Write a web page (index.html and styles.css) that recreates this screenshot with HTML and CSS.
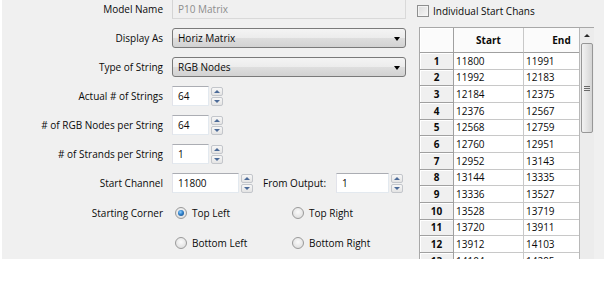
FILE: index.html
```html
<!DOCTYPE html>
<html>
<head>
<meta charset="utf-8">
<link rel="stylesheet" href="styles.css">
</head>
<body>
<div class="panel">
  <div class="left">
    <div class="row"><span class="lbl">Model Name</span><div class="text disabled">P10 Matrix</div></div>
    <div class="row"><span class="lbl">Display As</span><div class="combo">Horiz Matrix<span class="arrow"></span></div></div>
    <div class="row"><span class="lbl">Type of String</span><div class="combo">RGB Nodes<span class="arrow"></span></div></div>
    <div class="row"><span class="lbl">Actual # of Strings</span><div class="text num">64</div><div class="spinbtns"><span class="sb up"></span><span class="sb down"></span></div></div>
    <div class="row"><span class="lbl"># of RGB Nodes per String</span><div class="text num">64</div><div class="spinbtns"><span class="sb up"></span><span class="sb down"></span></div></div>
    <div class="row"><span class="lbl"># of Strands per String</span><div class="text num">1</div><div class="spinbtns"><span class="sb up"></span><span class="sb down"></span></div></div>
    <div class="row"><span class="lbl">Start Channel</span><div class="text chan">11800</div><div class="spinbtns"><span class="sb up"></span><span class="sb down"></span></div><span class="lbl2">From Output:</span><div class="text out">1</div><div class="spinbtns"><span class="sb up"></span><span class="sb down"></span></div></div>
    <div class="row rrow"><span class="lbl">Starting Corner</span><div class="radios"><span class="radio"><span class="rb on"></span>Top Left</span><span class="radio"><span class="rb"></span>Top Right</span></div></div>
    <div class="row rrow"><span class="lbl"></span><div class="radios"><span class="radio"><span class="rb"></span>Bottom Left</span><span class="radio"><span class="rb"></span>Bottom Right</span></div></div>
  </div>
  <div class="right">
    <div class="check"><span class="cb"></span>Individual Start Chans</div>
    <div class="grid">
      <div class="cells">
        <div class="grow head"><span class="corner"></span><span class="ch c1">Start</span><span class="ch c2">End</span></div>
        <div class="grow"><span class="rl">1</span><span class="cell c1">11800</span><span class="cell c2">11991</span></div>
        <div class="grow"><span class="rl">2</span><span class="cell c1">11992</span><span class="cell c2">12183</span></div>
        <div class="grow"><span class="rl">3</span><span class="cell c1">12184</span><span class="cell c2">12375</span></div>
        <div class="grow"><span class="rl">4</span><span class="cell c1">12376</span><span class="cell c2">12567</span></div>
        <div class="grow"><span class="rl">5</span><span class="cell c1">12568</span><span class="cell c2">12759</span></div>
        <div class="grow"><span class="rl">6</span><span class="cell c1">12760</span><span class="cell c2">12951</span></div>
        <div class="grow"><span class="rl">7</span><span class="cell c1">12952</span><span class="cell c2">13143</span></div>
        <div class="grow"><span class="rl">8</span><span class="cell c1">13144</span><span class="cell c2">13335</span></div>
        <div class="grow"><span class="rl">9</span><span class="cell c1">13336</span><span class="cell c2">13527</span></div>
        <div class="grow"><span class="rl">10</span><span class="cell c1">13528</span><span class="cell c2">13719</span></div>
        <div class="grow"><span class="rl">11</span><span class="cell c1">13720</span><span class="cell c2">13911</span></div>
        <div class="grow"><span class="rl">12</span><span class="cell c1">13912</span><span class="cell c2">14103</span></div>
        <div class="grow"><span class="rl">13</span><span class="cell c1">14104</span><span class="cell c2">14295</span></div>
      </div>
      <div class="vscroll">
        <div class="sarrow"></div>
        <div class="thumb"><span class="grip"></span></div>
      </div>
    </div>
  </div>
</div>
</body>
</html>
```
FILE: styles.css
```css
* { box-sizing: border-box; }
html, body { margin: 0; background: #fff; }
body {
  font-family: "Open Sans", "Noto Sans", sans-serif;
  font-size: 10px;
  color: #0a0a0a;
}
.panel {
  margin-left: 2px;
  width: 602px;
  height: 259px;
  background: #f0f0f0;
  display: flex;
  overflow: hidden;
}
.left {
  width: 415px;
  flex: none;
  display: flex;
  flex-direction: column;
  gap: 9px;
  margin-top: -1px;
}
.row {
  display: flex;
  align-items: center;
  height: 20px;
  flex: none;
}
.rrow { margin-top: 1px; }
.lbl {
  width: 161px;
  margin-right: 9px;
  text-align: right;
  flex: none;
}
.text {
  height: 20px;
  background: #fff;
  border: 1px solid;
  border-color: #abadb3 #e3e9ef #e3e9ef #e2e3ea;
  padding-left: 5px;
  display: flex;
  align-items: center;
  flex: none;
}
.disabled {
  width: 234px;
  background: #f0f0f0;
  color: #8d8d8d;
  border-color: #c8c8c8 #d9d9d9 #d9d9d9 #d4d4d4;
}
.num { width: 37px; }
.chan { width: 67px; }
.out { width: 53px; }
.combo {
  width: 234px;
  height: 20px;
  border: 1px solid #7a7a7a;
  border-radius: 3px;
  background: linear-gradient(#f4f4f4 0%, #ececec 50%, #dedede 51%, #d2d2d2 100%);
  padding-left: 5px;
  display: flex;
  align-items: center;
  position: relative;
  flex: none;
}
.arrow {
  position: absolute;
  right: 5px;
  top: 8px;
  width: 0;
  height: 0;
  border-left: 3.5px solid transparent;
  border-right: 3.5px solid transparent;
  border-top: 4px solid #000;
}
.spinbtns {
  display: flex;
  flex-direction: column;
  gap: 1px;
  margin-left: 2px;
  height: 20px;
  justify-content: center;
}
.sb {
  width: 12px;
  height: 9px;
  border: 1px solid #c3c6cb;
  border-radius: 2px;
  background: linear-gradient(#f7f7f7, #e4e4e4);
  display: flex;
  align-items: center;
  justify-content: center;
}
.sb::after {
  content: "";
  width: 0;
  height: 0;
  border-left: 3px solid transparent;
  border-right: 3px solid transparent;
}
.up::after { border-bottom: 3px solid #4c6b98; }
.down::after { border-top: 3px solid #4c6b98; }
.lbl2 {
  margin-left: 10px;
  margin-right: 10px;
}
.radios {
  display: flex;
  padding-left: 3px;
}
.radio {
  width: 117px;
  display: flex;
  align-items: center;
  gap: 5px;
}
.rb {
  width: 12px;
  height: 12px;
  border-radius: 50%;
  border: 1px solid #9a9a9a;
  background: radial-gradient(circle at 50% 40%, #fbfbfb 0%, #e6e6e6 60%, #d6d6d6 100%);
  display: flex;
  align-items: center;
  justify-content: center;
}
.rb.on::after {
  content: "";
  width: 6px;
  height: 6px;
  border-radius: 50%;
  background: radial-gradient(circle at 40% 35%, #8fd0ff 0%, #2f7fc8 45%, #14467f 100%);
}
.right {
  flex: 1;
  padding-top: 4px;
}
.check {
  display: flex;
  align-items: center;
  gap: 4px;
  height: 13px;
}
.cb {
  width: 12px;
  height: 12px;
  border: 1px solid #8e8f8f;
  background: linear-gradient(135deg, #dcdcdc, #f6f6f6);
  box-shadow: inset 0 0 0 1px #f4f4f4;
}
.grid {
  margin-top: 10px;
  margin-left: 2px;
  display: flex;
  width: 175px;
  height: 240px;
  border-left: 1px solid #a8a8a8;
  border-top: 1px solid #a8a8a8;
}
.cells {
  width: 160px;
  overflow: hidden;
  border-right: 1px solid #b8b8b8;
}
.grow {
  display: flex;
  height: 16.67px;
  width: 180px;
}
.grow.head { height: 25px; }
.corner, .rl {
  width: 34px;
  flex: none;
  background: #f0f0f0;
  border-right: 1px solid #a0a0a0;
  border-bottom: 1px solid #a0a0a0;
  box-shadow: inset 1px 1px #fff;
}
.corner { background: #fbfbfb; }
.rl {
  font-weight: bold;
  display: flex;
  align-items: center;
  justify-content: center;
}
.c1 { width: 70px; flex: none; }
.c2 { width: 76px; flex: none; }
.ch {
  background: #fbfbfb;
  border-right: 1px solid #c8c8c8;
  border-bottom: 1px solid #a0a0a0;
  font-weight: bold;
  display: flex;
  align-items: center;
  justify-content: center;
}
.cell {
  background: #fff;
  border-right: 1px solid #c8c8c8;
  border-bottom: 1px solid #c8c8c8;
  padding-left: 2px;
  display: flex;
  align-items: center;
}
.vscroll {
  width: 14px;
  background: #ececec;
  display: flex;
  flex-direction: column;
  align-items: center;
}
.sarrow {
  height: 14px;
  width: 13px;
  display: flex;
  align-items: center;
  justify-content: center;
}
.sarrow::after {
  content: "";
  width: 0;
  height: 0;
  border-left: 3px solid transparent;
  border-right: 3px solid transparent;
  border-bottom: 3px solid #2a2a2a;
}
.thumb {
  margin-top: 1px;
  width: 12px;
  height: 90px;
  border: 1px solid #979797;
  border-radius: 2px;
  background: linear-gradient(90deg, #f2f2f2, #e4e4e4 50%, #d4d4d4);
  display: flex;
  align-items: center;
  justify-content: center;
}
.grip {
  width: 6px;
  height: 5px;
  background: linear-gradient(#6a6a6a 0 1px, transparent 1px 2px, #6a6a6a 2px 3px, transparent 3px 4px, #6a6a6a 4px 5px);
}
```
